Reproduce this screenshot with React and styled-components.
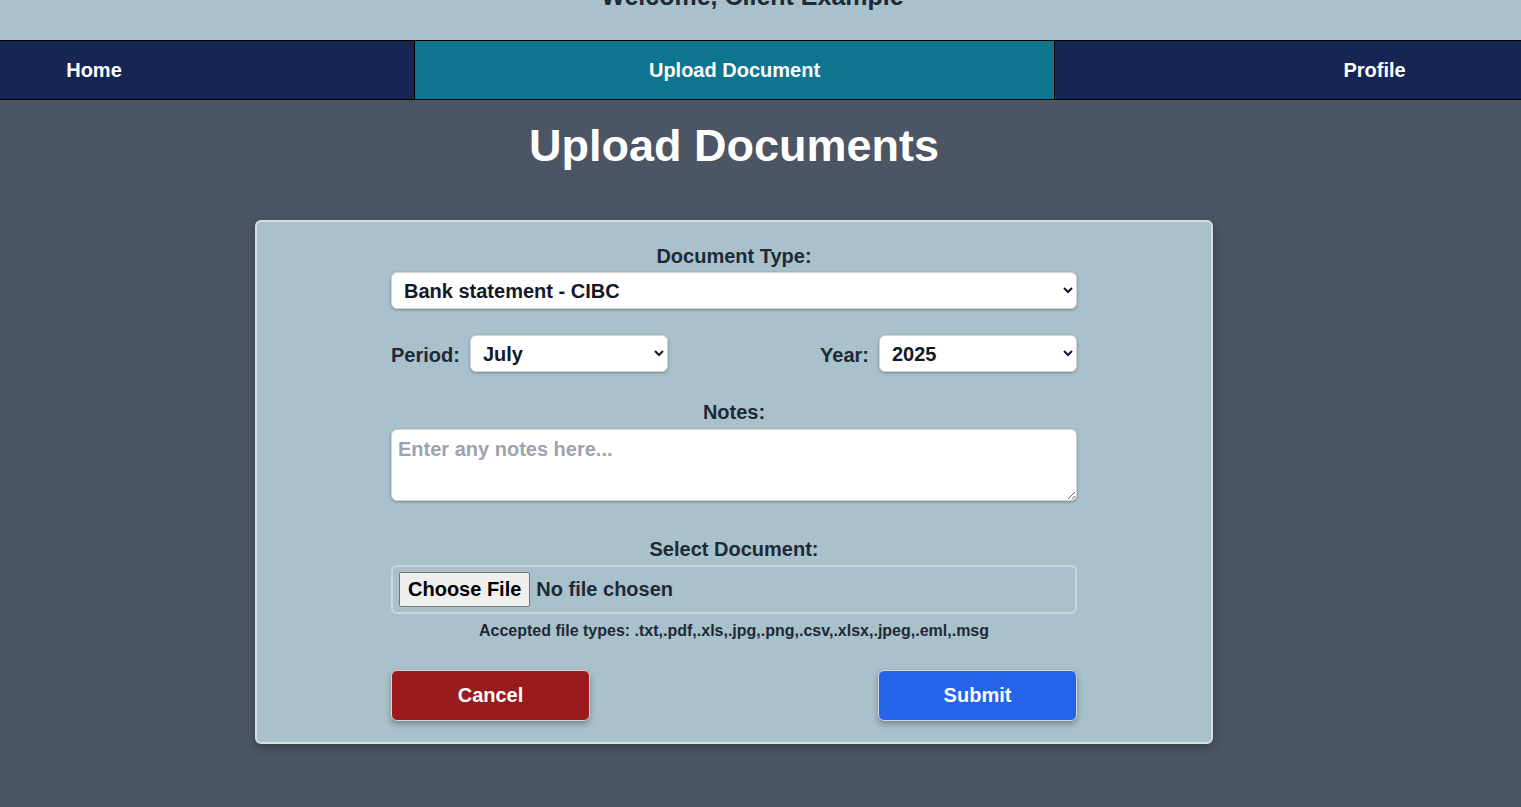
import React from "react";
import styled, { createGlobalStyle } from "styled-components";

const GlobalStyle = createGlobalStyle`
  html, body {
    margin: 0;
    padding: 0;
    overflow: hidden;
    background: #4b5563;
    font-family: "Liberation Sans", Arial, sans-serif;
  }
  * { box-sizing: border-box; }
`;

const Viewport = styled.div`
  width: 100vw;
  height: 100vh;
  overflow: hidden;
  background: #4b5563;
`;

/* the page is wider than the window and seen scrolled sideways */
const Page = styled.div`
  width: 1920px;
  margin-left: -226px;
`;

const Header = styled.header`
  height: 40px;
  overflow: hidden;
  background: #a9c1ca;
  display: flex;
  justify-content: center;
  padding-left: 37px;
`;

const Welcome = styled.h2`
  margin: -18px 0 0;
  font-size: 25px;
  line-height: 29px;
  font-weight: 700;
  color: #1f2937;
`;

const Nav = styled.nav`
  display: grid;
  grid-template-columns: repeat(3, 640px);
  height: 60px;
  border-top: 1px solid #000;
  border-bottom: 1px solid #000;
  background: #172554;
`;

const Tab = styled.a`
  display: flex;
  align-items: center;
  justify-content: center;
  color: #fff;
  font-size: 20px;
  font-weight: 700;
  text-decoration: none;
  background: ${(p) => (p.$active ? "#0e7490" : "#172554")};
  border-left: ${(p) => (p.$first ? "none" : "1px solid #000")};
`;

const Main = styled.main`
  display: flex;
  flex-direction: column;
  align-items: center;
`;

const Title = styled.h1`
  margin: 20px 0 48px;
  font-size: 45px;
  line-height: 52px;
  font-weight: 700;
  color: #fff;
`;

const Card = styled.form`
  width: 958px;
  background: #a9c1ca;
  border: 2px solid #d3dde2;
  border-radius: 6px;
  box-shadow: 0 4px 10px rgba(0, 0, 0, 0.25);
  padding: 22px 0 21px;
  display: flex;
  flex-direction: column;
  align-items: center;
`;

const Inner = styled.div`
  width: 686px;
  display: flex;
  flex-direction: column;
`;

const Label = styled.label`
  display: block;
  text-align: center;
  font-size: 20px;
  line-height: 24px;
  font-weight: 700;
  color: #1f2937;
  margin-bottom: ${(p) => p.$mb || 4}px;
`;

const Select = styled.select`
  height: 37px;
  width: ${(p) => p.$w || "100%"};
  padding: 0 8px;
  font-family: inherit;
  font-size: 20px;
  font-weight: 700;
  color: #111827;
  background: #fff;
  border: 1px solid #d1d5db;
  border-radius: 6px;
  box-shadow: 0 1px 3px rgba(0, 0, 0, 0.3);
  outline: none;
`;

const Row = styled.div`
  display: flex;
  justify-content: space-between;
  align-items: center;
  margin-top: ${(p) => p.$mt || 0}px;
`;

const Group = styled.div`
  display: flex;
  align-items: center;
  gap: 10px;
`;

const InlineLabel = styled.label`
  font-size: 20px;
  line-height: 24px;
  padding-top: 2px;
  font-weight: 700;
  color: #1f2937;
`;

const Section = styled.div`
  margin-top: ${(p) => p.$mt || 0}px;
`;

const TextArea = styled.textarea`
  display: block;
  width: 100%;
  height: 72px;
  padding: 8px 6px;
  font-family: inherit;
  font-size: 20px;
  font-weight: 700;
  color: #111827;
  background: #fff;
  border: 1px solid #d1d5db;
  border-radius: 6px;
  box-shadow: 0 1px 3px rgba(0, 0, 0, 0.3);
  outline: none;
  resize: vertical;
  &::placeholder {
    color: #9ca3af;
  }
`;

const FileBox = styled.div`
  height: 49px;
  display: flex;
  align-items: center;
  padding: 0 6px;
  border: 2px solid #c9d6dc;
  border-radius: 6px;
`;

const FileInput = styled.input`
  font-family: inherit;
  font-size: 20px;
  font-weight: 700;
  color: #1f2937;
  &::file-selector-button {
    font-family: inherit;
    font-size: 20px;
    font-weight: 700;
    color: #000;
    background: #efefef;
    border: 1px solid #767676;
    border-radius: 2px;
    height: 35px;
    padding: 0 8px;
    margin-right: 6px;
  }
`;

const Hint = styled.p`
  margin: 8px 0 0;
  text-align: center;
  font-size: 16px;
  line-height: 18px;
  font-weight: 700;
  color: #1f2937;
`;

const Button = styled.button`
  width: 199px;
  height: 51px;
  font-family: inherit;
  font-size: 20px;
  font-weight: 700;
  color: #fff;
  background: ${(p) => p.$bg};
  border: 1px solid #d1d5db;
  border-radius: 6px;
  box-shadow: 0 3px 6px rgba(0, 0, 0, 0.3);
  cursor: pointer;
`;

export default function App() {
  return (
    <>
      <GlobalStyle />
      <Viewport>
        <Page>
          <Header>
            <Welcome>Welcome, Client Example</Welcome>
          </Header>
          <Nav>
            <Tab $first href="#">Home</Tab>
            <Tab $active href="#">Upload Document</Tab>
            <Tab href="#">Profile</Tab>
          </Nav>
          <Main>
            <Title>Upload Documents</Title>
            <Card onSubmit={(e) => e.preventDefault()}>
              <Inner>
                <Label $mb={4}>Document Type:</Label>
                <Select defaultValue="cibc">
                  <option value="cibc">Bank statement - CIBC</option>
                  <option value="td">Bank statement - TD</option>
                </Select>
                <Row $mt={26}>
                  <Group>
                    <InlineLabel>Period:</InlineLabel>
                    <Select $w="198px" defaultValue="July">
                      <option>July</option>
                      <option>August</option>
                    </Select>
                  </Group>
                  <Group>
                    <InlineLabel>Year:</InlineLabel>
                    <Select $w="198px" defaultValue="2025">
                      <option>2025</option>
                      <option>2024</option>
                    </Select>
                  </Group>
                </Row>
                <Section $mt={28}>
                  <Label $mb={5}>Notes:</Label>
                  <TextArea placeholder="Enter any notes here..." />
                </Section>
                <Section $mt={36}>
                  <Label $mb={4}>Select Document:</Label>
                  <FileBox>
                    <FileInput type="file" />
                  </FileBox>
                  <Hint>Accepted file types: .txt,.pdf,.xls,.jpg,.png,.csv,.xlsx,.jpeg,.eml,.msg</Hint>
                </Section>
                <Row $mt={30}>
                  <Button type="button" $bg="#991b1b">Cancel</Button>
                  <Button type="submit" $bg="#2563eb">Submit</Button>
                </Row>
              </Inner>
            </Card>
          </Main>
        </Page>
      </Viewport>
    </>
  );
}
